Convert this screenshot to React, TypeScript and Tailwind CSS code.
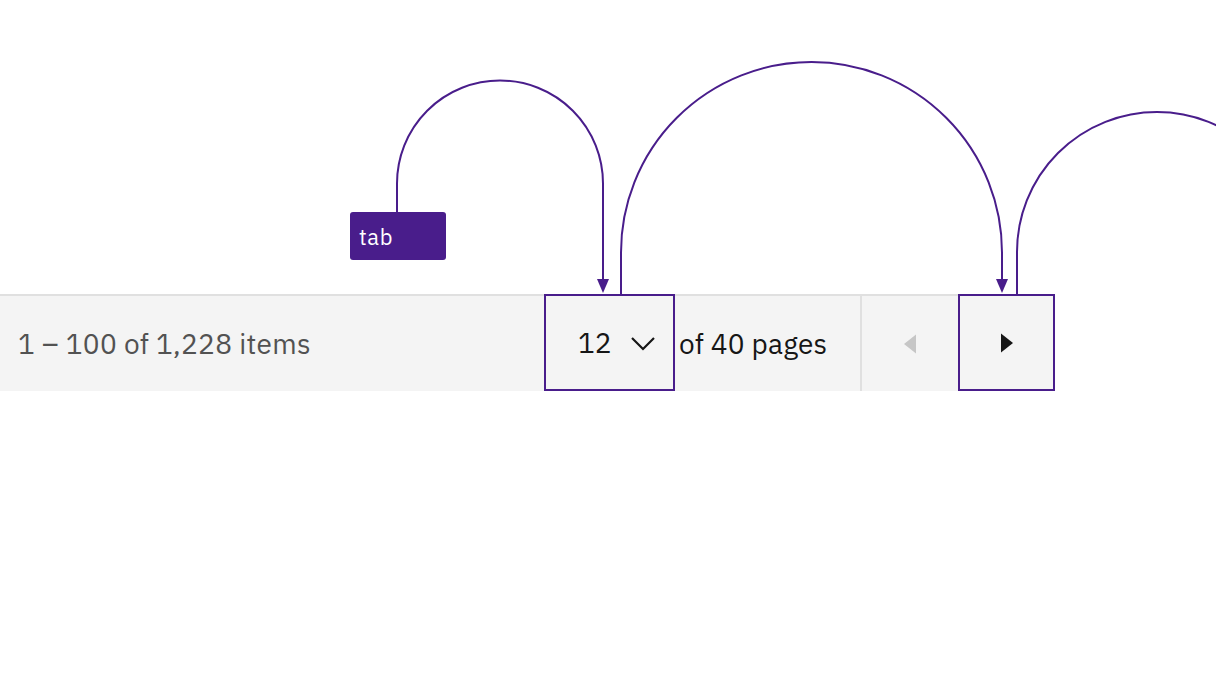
import React from "react";

const font = { fontFamily: '"IBM Plex Sans", Inter, "Noto Sans", sans-serif' };

export default function App() {
  return (
    <div className="relative w-[1216px] h-[684px] bg-white overflow-hidden" style={font}>
      <div className="pt-[294px]">
        <div className="flex w-[1055px] h-[97px] bg-[#f4f4f4]">
          <div className="flex-1 flex items-center pl-[18px] border-t-2 border-[#e0e0e0] text-[28px] tracking-[0.3px] text-[#525252]">
            1 – 100 of 1,228 items
          </div>
          <div className="w-[131px] flex items-center pl-[32px] border-2 border-[#491d8b] text-[28px] text-[#161616]">
            <span>12</span>
            <svg className="ml-[18px]" width="26" height="16" viewBox="0 0 26 16">
              <polyline points="2,3 13,14 24,3" fill="none" stroke="#161616" strokeWidth="2.2" />
            </svg>
          </div>
          <div className="w-[187px] flex items-center pl-[4px] border-t-2 border-r-2 border-[#e0e0e0] text-[28px] tracking-[0.2px] text-[#161616]">
            of 40 pages
          </div>
          <div className="w-[96px] flex items-center justify-center border-t-2 border-[#e0e0e0]">
            <svg width="14" height="20" viewBox="0 0 14 20">
              <polygon points="13,0.5 13,19.5 1,10" fill="#c6c6c6" />
            </svg>
          </div>
          <div className="w-[97px] flex items-center justify-center border-2 border-[#491d8b]">
            <svg width="14" height="20" viewBox="0 0 14 20">
              <polygon points="1,0.5 1,19.5 13,10" fill="#161616" />
            </svg>
          </div>
        </div>
      </div>

      <div className="absolute left-[350px] top-[212px] w-[96px] h-[48px] rounded-[3px] bg-[#491d8b] text-white text-[22px] tracking-[0.6px] flex items-center pl-[9px]">
        tab
      </div>

      <svg className="absolute left-0 top-0 pointer-events-none" width="1216" height="684" viewBox="0 0 1216 684">
        <g fill="none" stroke="#491d8b" strokeWidth="2">
          <path d="M397 212 V183.5 A103 103 0 0 1 603 183.5 V282" />
          <path d="M621 294 V252.5 A190.5 190.5 0 0 1 1002 252.5 V282" />
          <path d="M1017 294 V252 A140 140 0 0 1 1297 252" />
        </g>
        <g fill="#491d8b">
          <polygon points="597,279 609,279 603,293" />
          <polygon points="996,279 1008,279 1002,293" />
        </g>
      </svg>
    </div>
  );
}
